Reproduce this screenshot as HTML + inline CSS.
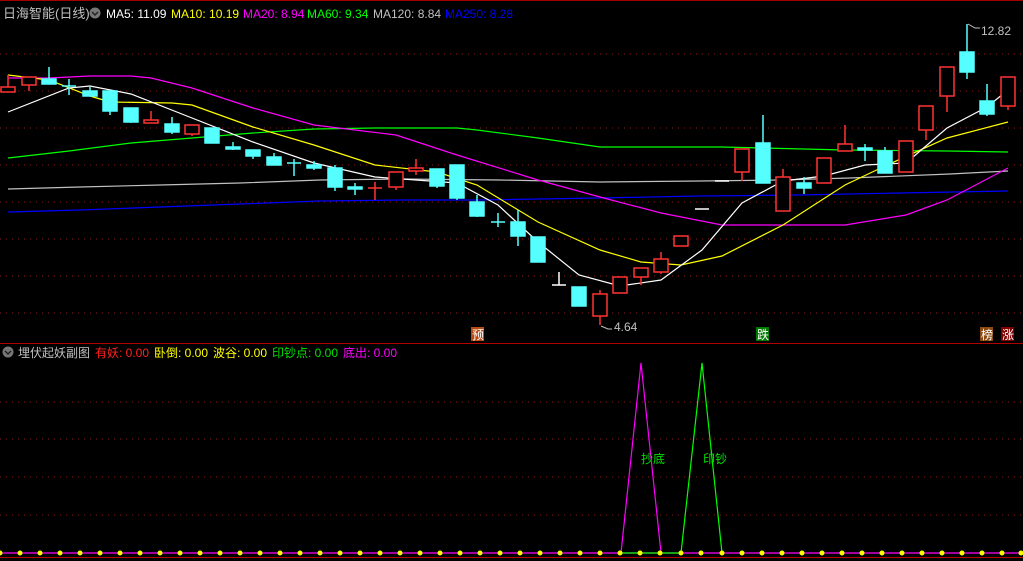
<!DOCTYPE html>
<html><head><meta charset="utf-8"><style>
html,body{margin:0;padding:0;background:#000;width:1023px;height:561px;overflow:hidden}
svg{display:block}
text{font-family:"Liberation Sans","Noto Sans CJK SC",sans-serif}
</style></head><body>
<svg width="1023" height="561" viewBox="0 0 1023 561" xmlns="http://www.w3.org/2000/svg">
<rect width="1023" height="561" fill="#000"/>
<line x1="0" y1="0.5" x2="1023" y2="0.5" stroke="#a00000"/>
<g stroke="#8a1a1a" stroke-dasharray="1,5">
<line x1="0" y1="54" x2="1023" y2="54"/><line x1="0" y1="91" x2="1023" y2="91"/>
<line x1="0" y1="128" x2="1023" y2="128"/><line x1="0" y1="165" x2="1023" y2="165"/>
<line x1="0" y1="202" x2="1023" y2="202"/><line x1="0" y1="239" x2="1023" y2="239"/>
<line x1="0" y1="276" x2="1023" y2="276"/><line x1="0" y1="313" x2="1023" y2="313"/>
<line x1="0" y1="402" x2="1023" y2="402"/><line x1="0" y1="439" x2="1023" y2="439"/>
<line x1="0" y1="477" x2="1023" y2="477"/><line x1="0" y1="515" x2="1023" y2="515"/>
</g>
<line x1="0" y1="343.5" x2="1023" y2="343.5" stroke="#b00000"/>
<line x1="0" y1="557.5" x2="1023" y2="557.5" stroke="#b00000"/>

<g fill="none" stroke-width="1.2">
<polyline stroke="#0000ff" points="8,212 80,210 160,207 240,204 320,201 400,200 480,200 600,198 700,196 800,195 900,193 1008,191"/>
<polyline stroke="#c0c0c0" points="8,189 80,187 160,185 240,183 320,180 400,179 500,180 600,182 700,181 780,180 850,178 950,174 1008,171"/>
<polyline stroke="#00ff00" points="8,158 69,151 131,143 192,138 253,133 314,129 375,128 457,128 477,130 538,138 600,147 722,147 845,150 947,151 1008,152"/>
<polyline stroke="#ff00ff" points="8,78 49,78 90,76 131,76 151,78 192,88 253,108 314,125 355,130 396,135 457,155 538,180 600,197 661,213 722,225 783,225 845,225 906,215 947,200 1008,168"/>
<polyline stroke="#ffff00" points="8,75 49,80 90,96 110,102 172,103 192,105 253,127 314,145 375,165 437,172 477,185 538,222 600,250 641,262 681,265 722,256 783,225 845,185 885,166 947,138 1008,122"/>
<polyline stroke="#ffffff" points="8,112 69,88 90,86 131,94 192,118 253,142 314,163 375,177 416,180 457,183 498,205 538,242 579,275 620,286 661,280 702,250 742,203 783,181 824,176 865,165 906,163 947,128 987,107 1008,90"/>
</g>

<g stroke-width="1.5">
<g stroke="#ff3333" fill="#000">
<line x1="8" y1="75" x2="8" y2="87"/><rect x="1" y="87" width="14" height="5"/>
<line x1="29" y1="85" x2="29" y2="91"/><rect x="22" y="77" width="14" height="8"/>
<line x1="151" y1="111" x2="151" y2="120"/><rect x="144" y="120" width="14" height="3"/>
<line x1="192" y1="134" x2="192" y2="136"/><rect x="185" y="125" width="14" height="9"/>
<line x1="375" y1="182" x2="375" y2="200"/><line x1="368" y1="188" x2="382" y2="188"/>
<line x1="396" y1="187" x2="396" y2="190"/><rect x="389" y="172" width="14" height="15"/>
<line x1="416" y1="159" x2="416" y2="175"/><rect x="409" y="168" width="14" height="3"/>
<line x1="600" y1="290" x2="600" y2="325"/><rect x="593" y="294" width="14" height="22"/>
<rect x="613" y="277" width="14" height="16"/>
<line x1="641" y1="277" x2="641" y2="285"/><rect x="634" y="268" width="14" height="9"/>
<line x1="661" y1="252" x2="661" y2="274"/><rect x="654" y="259" width="14" height="13"/>
<rect x="674" y="236" width="14" height="10"/>
<line x1="742" y1="172" x2="742" y2="181"/><rect x="735" y="149" width="14" height="23"/>
<line x1="783" y1="169" x2="783" y2="177"/><rect x="776" y="177" width="14" height="34"/>
<rect x="817" y="158" width="14" height="25"/>
<line x1="845" y1="125" x2="845" y2="144"/><rect x="838" y="144" width="14" height="7"/>
<rect x="899" y="141" width="14" height="31"/>
<line x1="926" y1="130" x2="926" y2="140"/><rect x="919" y="106" width="14" height="24"/>
<line x1="947" y1="96" x2="947" y2="112"/><rect x="940" y="67" width="14" height="29"/>
<line x1="1008" y1="106" x2="1008" y2="110"/><rect x="1001" y="77" width="14" height="29"/>
</g>
<g stroke="#55ffff" fill="#55ffff">
<line x1="49" y1="67" x2="49" y2="84"/><rect x="42" y="79" width="14" height="5"/>
<line x1="69" y1="79" x2="69" y2="95"/><line x1="62" y1="86" x2="76" y2="86"/>
<line x1="90" y1="87" x2="90" y2="96"/><rect x="83" y="91" width="14" height="5"/>
<line x1="110" y1="91" x2="110" y2="115"/><rect x="103" y="91" width="14" height="20"/>
<line x1="131" y1="108" x2="131" y2="123"/><rect x="124" y="108" width="14" height="14"/>
<line x1="172" y1="117" x2="172" y2="134"/><rect x="165" y="124" width="14" height="8"/>
<rect x="205" y="128" width="14" height="15"/>
<line x1="233" y1="142" x2="233" y2="150"/><rect x="226" y="147" width="14" height="2"/>
<line x1="253" y1="150" x2="253" y2="159"/><rect x="246" y="150" width="14" height="6"/>
<line x1="274" y1="153" x2="274" y2="165"/><rect x="267" y="157" width="14" height="8"/>
<line x1="294" y1="159" x2="294" y2="176"/><line x1="287" y1="163" x2="301" y2="163"/>
<line x1="314" y1="161" x2="314" y2="170"/><rect x="307" y="165" width="14" height="3"/>
<line x1="335" y1="165" x2="335" y2="191"/><rect x="328" y="168" width="14" height="19"/>
<line x1="355" y1="183" x2="355" y2="195"/><rect x="348" y="187" width="14" height="2"/>
<line x1="437" y1="169" x2="437" y2="188"/><rect x="430" y="169" width="14" height="17"/>
<line x1="457" y1="165" x2="457" y2="200"/><rect x="450" y="165" width="14" height="33"/>
<line x1="477" y1="195" x2="477" y2="217"/><rect x="470" y="202" width="14" height="14"/>
<line x1="498" y1="213" x2="498" y2="227"/><line x1="491" y1="222" x2="505" y2="222"/>
<line x1="518" y1="210" x2="518" y2="246"/><rect x="511" y="222" width="14" height="14"/>
<rect x="531" y="237" width="14" height="25"/>
<rect x="572" y="287" width="14" height="19"/>
<line x1="763" y1="115" x2="763" y2="143"/><rect x="756" y="143" width="14" height="40"/>
<line x1="804" y1="177" x2="804" y2="194"/><rect x="797" y="183" width="14" height="5"/>
<line x1="865" y1="144" x2="865" y2="161"/><rect x="858" y="148" width="14" height="2"/>
<line x1="885" y1="147" x2="885" y2="173"/><rect x="878" y="151" width="14" height="22"/>
<line x1="967" y1="24" x2="967" y2="79"/><rect x="960" y="52" width="14" height="20"/>
<line x1="987" y1="84" x2="987" y2="116"/><rect x="980" y="101" width="14" height="13"/>
</g>
<g stroke="#ffffff">
<line x1="559" y1="272" x2="559" y2="285"/><line x1="552" y1="285" x2="566" y2="285"/>
<line x1="695" y1="209" x2="709" y2="209"/>
<line x1="715" y1="181" x2="729" y2="181"/>
</g>
</g>

<g stroke="#c0c0c0" fill="none" stroke-width="1"><path d="M968,24 L975,28 L980,28"/><path d="M601,326 L608,329 L612,329"/></g>
<text x="981" y="35" fill="#c0c0c0" font-size="12">12.82</text>
<text x="614" y="331" fill="#c0c0c0" font-size="12">4.64</text>

<rect x="471" y="327" width="13" height="14" fill="#b84a10"/><text x="472" y="339" fill="#fff" font-size="12">预</text>
<rect x="756" y="327" width="13" height="14" fill="#007a00"/><text x="757" y="339" fill="#fff" font-size="12">跌</text>
<rect x="980" y="327" width="13" height="14" fill="#8a4a10"/><text x="981" y="339" fill="#fff" font-size="12">榜</text>
<rect x="1001" y="327" width="13" height="14" fill="#800000"/><text x="1002" y="339" fill="#fff" font-size="12">涨</text>

<text x="3" y="18" font-size="13" fill="#c0c0c0">日海智能(日线)</text>
<circle cx="95" cy="13" r="5.5" fill="#777"/><path d="M92,12 L95,15 L98,12" stroke="#222" stroke-width="1.5" fill="none"/>
<text y="18" font-size="12"><tspan x="106" fill="#ffffff">MA5: 11.09</tspan><tspan x="171" fill="#ffff00">MA10: 10.19</tspan><tspan x="243" fill="#ff00ff">MA20: 8.94</tspan><tspan x="307" fill="#00ff00">MA60: 9.34</tspan><tspan x="373" fill="#c0c0c0">MA120: 8.84</tspan><tspan x="445" fill="#0000ff">MA250: 8.28</tspan></text>

<circle cx="8" cy="352" r="5.5" fill="#777"/><path d="M5,351 L8,354 L11,351" stroke="#222" stroke-width="1.5" fill="none"/>
<text y="357" font-size="12"><tspan x="18" fill="#c0c0c0">埋伏起妖副图</tspan><tspan x="95" fill="#ff2020">有妖: 0.00</tspan><tspan x="154" fill="#ffff00">卧倒: 0.00</tspan><tspan x="213" fill="#ffff00">波谷: 0.00</tspan><tspan x="272" fill="#00e000">印钞点: 0.00</tspan><tspan x="343" fill="#ff00ff">底出: 0.00</tspan></text>

<line x1="0" y1="553" x2="1023" y2="553" stroke="#ff00ff" stroke-width="1.2"/>
<line x1="621" y1="553" x2="681" y2="553" stroke="#00ff00" stroke-width="1.2"/>
<polyline points="621,553 641,363 661,553" fill="none" stroke="#ff00ff" stroke-width="1.2"/>
<polyline points="681,553 702,363 722,553" fill="none" stroke="#00ff00" stroke-width="1.2"/>
<text x="641" y="463" fill="#00e000" font-size="12">抄底</text>
<text x="703" y="463" fill="#00e000" font-size="12">印钞</text>
<g fill="#ffff00">
<circle cx="0" cy="553" r="2.5"/><circle cx="20" cy="553" r="2.5"/><circle cx="40" cy="553" r="2.5"/><circle cx="60" cy="553" r="2.5"/><circle cx="80" cy="553" r="2.5"/><circle cx="100" cy="553" r="2.5"/><circle cx="120" cy="553" r="2.5"/><circle cx="140" cy="553" r="2.5"/><circle cx="160" cy="553" r="2.5"/><circle cx="180" cy="553" r="2.5"/><circle cx="200" cy="553" r="2.5"/><circle cx="220" cy="553" r="2.5"/><circle cx="240" cy="553" r="2.5"/><circle cx="260" cy="553" r="2.5"/><circle cx="280" cy="553" r="2.5"/><circle cx="300" cy="553" r="2.5"/><circle cx="320" cy="553" r="2.5"/><circle cx="340" cy="553" r="2.5"/><circle cx="360" cy="553" r="2.5"/><circle cx="380" cy="553" r="2.5"/><circle cx="400" cy="553" r="2.5"/><circle cx="420" cy="553" r="2.5"/><circle cx="440" cy="553" r="2.5"/><circle cx="460" cy="553" r="2.5"/><circle cx="480" cy="553" r="2.5"/><circle cx="500" cy="553" r="2.5"/><circle cx="520" cy="553" r="2.5"/><circle cx="540" cy="553" r="2.5"/><circle cx="560" cy="553" r="2.5"/><circle cx="580" cy="553" r="2.5"/><circle cx="600" cy="553" r="2.5"/><circle cx="620" cy="553" r="2.5"/><circle cx="640" cy="553" r="2.5"/><circle cx="660" cy="553" r="2.5"/><circle cx="681" cy="553" r="2.5"/><circle cx="701" cy="553" r="2.5"/><circle cx="722" cy="553" r="2.5"/><circle cx="742" cy="553" r="2.5"/><circle cx="762" cy="553" r="2.5"/><circle cx="782" cy="553" r="2.5"/><circle cx="802" cy="553" r="2.5"/><circle cx="822" cy="553" r="2.5"/><circle cx="842" cy="553" r="2.5"/><circle cx="862" cy="553" r="2.5"/><circle cx="882" cy="553" r="2.5"/><circle cx="902" cy="553" r="2.5"/><circle cx="922" cy="553" r="2.5"/><circle cx="942" cy="553" r="2.5"/><circle cx="962" cy="553" r="2.5"/><circle cx="982" cy="553" r="2.5"/><circle cx="1002" cy="553" r="2.5"/><circle cx="1021" cy="553" r="2.5"/>
</g>
</svg>
</body></html>
